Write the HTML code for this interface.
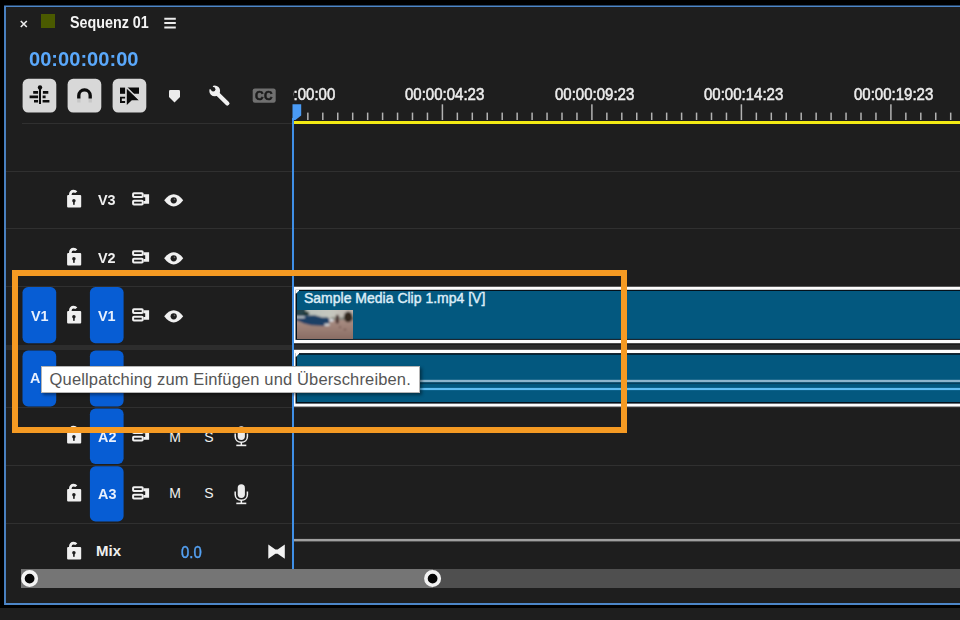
<!DOCTYPE html>
<html lang="de">
<head>
<meta charset="utf-8">
<title>Sequenz 01</title>
<style>
html,body{margin:0;padding:0;background:#000;}
body{width:960px;height:620px;overflow:hidden;position:relative;font-family:"Liberation Sans",sans-serif;color:#e4e4e4;}
*{box-sizing:border-box;}
#app{position:absolute;left:0;top:0;width:960px;height:620px;overflow:hidden;background:#000;}
#app *{position:absolute;}
#app svg *{position:static;}
#app span{display:block;white-space:pre;transform-origin:0 0;}
.panel{left:6px;top:7px;width:954px;height:596px;background:#1e1e1e;}
.under{left:0;top:608px;width:960px;height:12px;background:#1e1e1e;}
.hl{left:6px;width:954px;height:1px;background:#303030;}
.band{left:6px;top:344.5px;width:954px;height:5px;background:#2d2d2d;}
.chip{left:41px;top:14px;width:14px;height:14px;background:#4a5a00;}
.title{left:70px;top:13.7px;font:bold 16px/18px "Liberation Sans",sans-serif;color:#f4f4f4;transform:scaleX(0.895);}
.tc{left:28.8px;top:47.2px;font:bold 21px/24px "Liberation Sans",sans-serif;color:#5aa8fb;transform:scaleX(0.957);}
.rulerclip{left:293px;top:80px;width:667px;height:45px;overflow:hidden;}
.rl{top:5.4px;font:16.5px/19px "Liberation Sans",sans-serif;color:#ededed;-webkit-text-stroke:0.55px #ededed;transform:scaleX(0.909);}
.yl{left:294px;top:121px;width:666px;height:3px;background:#f2ea14;}
.ic{overflow:visible;}
.tn{left:98.3px;font:bold 15px/19px "Liberation Sans",sans-serif;color:#f0f0f0;transform:scaleX(0.96);}
.ms{font:14px/16px "Liberation Sans",sans-serif;color:#f0f0f0;}
.bn{font:bold 15px/19px "Liberation Sans",sans-serif;color:#e8f0fd;transform:scaleX(0.96);}
.ct{left:304px;top:290.1px;font:14px/17px "Liberation Sans",sans-serif;color:#dcecf7;-webkit-text-stroke:0.45px #dcecf7;}
.orange{left:12px;top:270px;width:615px;height:163px;border:6px solid #f59a23;}
.tip{left:41px;top:366px;width:379px;height:27px;background:#fff;border:1px solid #b4b4b4;box-shadow:2px 2px 3px rgba(0,0,0,.42);}
.tip span{left:7.6px;top:2.2px;font:16.5px/21px "Liberation Sans",sans-serif;letter-spacing:0.14px;color:#555;}
.sb{left:21px;top:569px;height:19px;}
</style>
</head>
<body>
<div id="app">
<svg style="left:0;top:0" width="960" height="620" viewBox="0 0 960 620"><path d="M960 6.5H5V604H960" fill="none" stroke="#4d86c8" stroke-width="1.9"/></svg>
<div class="panel"></div>
<div class="under"></div>

<!-- tab header -->
<svg style="left:20px;top:20px" width="8" height="8" viewBox="0 0 8 8"><path d="M0.8 1L6.8 7M6.8 1L0.8 7" stroke="#ececec" stroke-width="1.6" fill="none"/></svg>
<div class="chip"></div>
<span class="title">Sequenz 01</span>
<svg style="left:164px;top:17px" width="12" height="12" viewBox="0 0 12 12"><path d="M0.3 1.8h11.5M0.3 6.1h11.5M0.3 10.5h11.5" stroke="#ececec" stroke-width="2" fill="none"/></svg>
<span class="tc">00:00:00:00</span>

<!-- toolbar -->
<svg class="ic" style="left:22px;top:78px" width="36" height="36" viewBox="0 0 36 36"><rect x="0.6" y="0.8" width="33.7" height="33.8" rx="5.6" fill="#d8d8d8"/><g transform="translate(0.6,1)"><path d="M17.4 8V25" stroke="#0c0c0c" stroke-width="2"/><circle cx="17.4" cy="8.4" r="2.2" fill="#0c0c0c"/><path d="M10.6 13.4h4.9M20.3 13.4h5.4M7 17.9h8.5M20 17.9h3M11.4 22.3h4.1M20 22.3h6.8" stroke="#0c0c0c" stroke-width="2.6" fill="none"/></g></svg>
<svg class="ic" style="left:67px;top:78px" width="36" height="36" viewBox="0 0 36 36"><rect x="0.6" y="0.8" width="33.7" height="33.8" rx="5.6" fill="#d8d8d8"/><g transform="translate(0.6,1)"><path d="M11.2 23.4V16.6a5.7 5.7 0 0 1 11.4 0V23.4" stroke="#c6c6c6" stroke-width="3.3" fill="none"/><path d="M11.2 19.4V16.6a5.7 5.7 0 0 1 11.4 0V19.4" stroke="#0c0c0c" stroke-width="3.3" fill="none"/></g></svg>
<svg class="ic" style="left:112px;top:78px" width="36" height="36" viewBox="0 0 36 36"><rect x="0.6" y="0.8" width="33.7" height="33.8" rx="5.6" fill="#d8d8d8"/><g transform="translate(0.6,1)"><rect x="7.4" y="8.6" width="5.1" height="6.2" fill="#0c0c0c"/><path d="M14.6 8.6h11.8v6.2h-5.6z" fill="#0c0c0c"/><path d="M12.5 18.6H8.3v4.4h4.2" stroke="#0c0c0c" stroke-width="1.8" fill="none"/><path d="M14.2 9.8L26.2 21.2H19.2L14.2 26Z" fill="#0c0c0c"/><path d="M13.9 8.2L26.6 20.6" stroke="#d8d8d8" stroke-width="1.1"/></g></svg>
<svg style="left:168px;top:89px" width="13" height="14" viewBox="0 0 13 14"><path d="M1 2.3Q1 1 2.3 1h8.4Q12 1 12 2.3V8L6.5 13.5L1 8Z" fill="#ececec"/></svg>
<svg style="left:207px;top:84px" width="25" height="23" viewBox="0 0 25 23"><path d="M9.2 8.4L20.4 19.4" stroke="#f0f0f0" stroke-width="4.2" stroke-linecap="round" fill="none"/><circle cx="7.7" cy="6.9" r="5.4" fill="#f0f0f0"/><path d="M7.4 6.6L1.2 4.8L5.2 0.6Z" fill="#1e1e1e"/><circle cx="6.2" cy="5.3" r="2.2" fill="#1e1e1e"/></svg>
<svg style="left:252px;top:88px" width="24" height="15" viewBox="0 0 24 15"><rect x="0.7" y="0.4" width="23" height="14.4" rx="2.2" fill="#707070"/></svg><span style="left:255.4px;top:88.7px;font:bold 12.5px/14px 'Liberation Sans',sans-serif;color:#1c1c1c;-webkit-text-stroke:0.6px #1c1c1c;letter-spacing:0.5px;transform:scaleX(0.95)">CC</span>

<!-- separators -->
<div class="hl" style="left:22px;width:270px;top:123px"></div>
<div class="hl" style="top:171px"></div>
<div class="hl" style="top:228px"></div>
<div class="hl" style="top:286px"></div>
<div class="band"></div>
<div class="hl" style="top:407px"></div>
<div class="hl" style="top:465px"></div>
<div class="hl" style="top:523px"></div>

<!-- ruler -->
<div class="rulerclip"><span class="rl" style="left:-37.5px">00:00:00:00</span><span class="rl" style="left:112.0px">00:00:04:23</span><span class="rl" style="left:261.5px">00:00:09:23</span><span class="rl" style="left:411.0px">00:00:14:23</span><span class="rl" style="left:560.5px">00:00:19:23</span></div>
<svg style="left:0;top:0" width="960" height="125" viewBox="0 0 960 125"><g fill="#b2b2b2"><rect x="307.1" y="112.6" width="1.5" height="7.4"/><rect x="322.05" y="112.6" width="1.5" height="7.4"/><rect x="337.0" y="112.6" width="1.5" height="7.4"/><rect x="351.95" y="112.6" width="1.5" height="7.4"/><rect x="366.9" y="112.6" width="1.5" height="7.4"/><rect x="381.85" y="112.6" width="1.5" height="7.4"/><rect x="396.8" y="112.6" width="1.5" height="7.4"/><rect x="411.75" y="112.6" width="1.5" height="7.4"/><rect x="426.7" y="112.6" width="1.5" height="7.4"/><rect x="441.65" y="104.3" width="1.5" height="15.7"/><rect x="456.6" y="112.6" width="1.5" height="7.4"/><rect x="471.55" y="112.6" width="1.5" height="7.4"/><rect x="486.5" y="112.6" width="1.5" height="7.4"/><rect x="501.45" y="112.6" width="1.5" height="7.4"/><rect x="516.4" y="112.6" width="1.5" height="7.4"/><rect x="531.35" y="112.6" width="1.5" height="7.4"/><rect x="546.3" y="112.6" width="1.5" height="7.4"/><rect x="561.25" y="112.6" width="1.5" height="7.4"/><rect x="576.2" y="112.6" width="1.5" height="7.4"/><rect x="591.15" y="104.3" width="1.5" height="15.7"/><rect x="606.1" y="112.6" width="1.5" height="7.4"/><rect x="621.05" y="112.6" width="1.5" height="7.4"/><rect x="636.0" y="112.6" width="1.5" height="7.4"/><rect x="650.95" y="112.6" width="1.5" height="7.4"/><rect x="665.9" y="112.6" width="1.5" height="7.4"/><rect x="680.85" y="112.6" width="1.5" height="7.4"/><rect x="695.8" y="112.6" width="1.5" height="7.4"/><rect x="710.75" y="112.6" width="1.5" height="7.4"/><rect x="725.7" y="112.6" width="1.5" height="7.4"/><rect x="740.65" y="104.3" width="1.5" height="15.7"/><rect x="755.6" y="112.6" width="1.5" height="7.4"/><rect x="770.55" y="112.6" width="1.5" height="7.4"/><rect x="785.5" y="112.6" width="1.5" height="7.4"/><rect x="800.45" y="112.6" width="1.5" height="7.4"/><rect x="815.4" y="112.6" width="1.5" height="7.4"/><rect x="830.35" y="112.6" width="1.5" height="7.4"/><rect x="845.3" y="112.6" width="1.5" height="7.4"/><rect x="860.25" y="112.6" width="1.5" height="7.4"/><rect x="875.2" y="112.6" width="1.5" height="7.4"/><rect x="890.15" y="104.3" width="1.5" height="15.7"/><rect x="905.1" y="112.6" width="1.5" height="7.4"/><rect x="920.05" y="112.6" width="1.5" height="7.4"/><rect x="935.0" y="112.6" width="1.5" height="7.4"/><rect x="949.95" y="112.6" width="1.5" height="7.4"/></g></svg>
<div class="yl"></div>

<!-- clips -->
<svg style="left:0;top:280px" width="960" height="130" viewBox="0 280 960 130">
<rect x="294" y="286.8" width="680" height="56.4" fill="#fdfdfd"/><rect x="295.5" y="289.8" width="680" height="50.1" fill="#03101a"/><rect x="297" y="291" width="680" height="47.9" fill="#03587f"/>
<path d="M295.5 289.8H299V290.4L296.2 293.4H295.5Z" fill="#fdfdfd"/>
<rect x="294" y="349.8" width="680" height="56.8" fill="#fdfdfd"/><rect x="295.5" y="353.1" width="680" height="50.5" fill="#03101a"/><rect x="297" y="354.7" width="680" height="47.3" fill="#03587f"/>
<path d="M295.5 353.1H299V353.7L296.2 356.7H295.5Z" fill="#fdfdfd"/>
<rect x="297" y="379.8" width="680" height="2.6" fill="#8db5cd"/><rect x="297" y="382.4" width="680" height="1.7" fill="#043f5e"/><rect x="297" y="387.9" width="680" height="2.2" fill="#60bdf1"/>
</svg>
<span class="ct">Sample Media Clip 1.mp4 [V]</span>
<svg style="left:297px;top:309.5px" width="56" height="29.4" viewBox="0 0 56 29.5" preserveAspectRatio="none">
<defs><filter id="bl" x="-20%" y="-20%" width="140%" height="140%"><feGaussianBlur stdDeviation="1"/></filter>
<linearGradient id="sand" x1="0" y1="0" x2="0" y2="1"><stop offset="0" stop-color="#ab8f85"/><stop offset="0.45" stop-color="#9a7d73"/><stop offset="1" stop-color="#84685f"/></linearGradient>
<linearGradient id="sky" x1="0" y1="0" x2="1" y2="0"><stop offset="0" stop-color="#b4bdb8"/><stop offset="0.6" stop-color="#c6c7bf"/><stop offset="1" stop-color="#bcaea6"/></linearGradient>
<clipPath id="tcp"><rect width="56" height="29.5"/></clipPath></defs>
<g clip-path="url(#tcp)"><rect width="56" height="29.5" fill="#a4867b"/>
<g filter="url(#bl)">
<rect x="-3" y="-3" width="62" height="12" fill="url(#sky)"/>
<rect x="-3" y="8.6" width="62" height="24" fill="url(#sand)"/>
<rect x="34" y="7.4" width="25" height="2.6" fill="#84857c"/>
<rect x="-3" y="-3" width="11.5" height="10" fill="#25454d"/>
<ellipse cx="9.4" cy="3.6" rx="2.8" ry="2" fill="#1d3229"/>
<path d="M-2 7.2L8 5.4L18 5.2L25.5 7.6L30.5 7.2L33 10L31.5 13.8L27 16L14 15.4L7 13.6L1.5 11L-2 10.4Z" fill="#1c4166"/>
<rect x="-2" y="6.3" width="9.8" height="1.8" fill="#ccd1d5"/>
<ellipse cx="34.4" cy="10.4" rx="2.4" ry="1.3" fill="#dfe4ea"/>
<ellipse cx="30" cy="14.8" rx="3" ry="1.2" fill="#d5d6d8"/>
<rect x="38.8" y="4.8" width="3" height="8.8" rx="1.3" fill="#452c29"/>
<ellipse cx="51.2" cy="7" rx="4.4" ry="5.4" fill="#30261f"/>
<ellipse cx="43" cy="17" rx="1.1" ry="0.7" fill="#654a43"/>
<ellipse cx="48" cy="19.5" rx="1.3" ry="0.7" fill="#654a43"/>
</g></g></svg>

<!-- mix track line -->
<svg style="left:294px;top:536px" width="666" height="8" viewBox="0 0 666 8"><rect x="0" y="2.9" width="666" height="2.5" fill="#a0a0a0"/></svg>

<!-- track headers -->
<svg class="ic" style="left:66px;top:190px" width="17" height="19" viewBox="0 0 17 19"><path d="M4.3 7V4.8Q4.3 1.1 7.6 1.1Q9.4 1.1 10.3 2.3" fill="none" stroke="#f0f0f0" stroke-width="2.6"/><rect x="1.1" y="5.1" width="14.1" height="12.4" rx="1" fill="#f0f0f0"/><circle cx="7.9" cy="10.7" r="1.75" fill="#1e1e1e"/><rect x="7.1" y="11" width="1.6" height="3.8" fill="#1e1e1e"/></svg><span class="tn" style="top:190.3px">V3</span><svg class="ic" style="left:132px;top:192px" width="18" height="14" viewBox="0 0 18 14"><g fill="none" stroke="#f0f0f0" stroke-width="2"><rect x="1.1" y="1.3" width="9.6" height="3.7" rx="0.8"/><rect x="1.1" y="8.8" width="9.6" height="3.7" rx="0.8"/></g><path d="M11.6 2.3H17.1V11.8H11.6V8.9H13.2V5.2H11.6Z" fill="#f0f0f0"/></svg><svg class="ic" style="left:164px;top:194px" width="20" height="13" viewBox="0 0 20 13"><path d="M0.2 6.3Q4.6 0.2 9.7 0.2Q14.8 0.2 19.2 6.3Q14.8 12.4 9.7 12.4Q4.6 12.4 0.2 6.3Z" fill="#f0f0f0"/><circle cx="9.7" cy="6.3" r="3.1" fill="#1e1e1e"/><circle cx="10.5" cy="5.4" r="0.8" fill="#666"/></svg><svg class="ic" style="left:66px;top:248px" width="17" height="19" viewBox="0 0 17 19"><path d="M4.3 7V4.8Q4.3 1.1 7.6 1.1Q9.4 1.1 10.3 2.3" fill="none" stroke="#f0f0f0" stroke-width="2.6"/><rect x="1.1" y="5.1" width="14.1" height="12.4" rx="1" fill="#f0f0f0"/><circle cx="7.9" cy="10.7" r="1.75" fill="#1e1e1e"/><rect x="7.1" y="11" width="1.6" height="3.8" fill="#1e1e1e"/></svg><span class="tn" style="top:248.3px">V2</span><svg class="ic" style="left:132px;top:250px" width="18" height="14" viewBox="0 0 18 14"><g fill="none" stroke="#f0f0f0" stroke-width="2"><rect x="1.1" y="1.3" width="9.6" height="3.7" rx="0.8"/><rect x="1.1" y="8.8" width="9.6" height="3.7" rx="0.8"/></g><path d="M11.6 2.3H17.1V11.8H11.6V8.9H13.2V5.2H11.6Z" fill="#f0f0f0"/></svg><svg class="ic" style="left:164px;top:252px" width="20" height="13" viewBox="0 0 20 13"><path d="M0.2 6.3Q4.6 0.2 9.7 0.2Q14.8 0.2 19.2 6.3Q14.8 12.4 9.7 12.4Q4.6 12.4 0.2 6.3Z" fill="#f0f0f0"/><circle cx="9.7" cy="6.3" r="3.1" fill="#1e1e1e"/><circle cx="10.5" cy="5.4" r="0.8" fill="#666"/></svg><svg class="ic" style="left:22px;top:287px" width="103" height="58" viewBox="0 0 103 58"><rect x="0.5" y="0.0" width="33.7" height="56.2" rx="5.6" fill="#075dd4"/></svg><span class="bn" style="left:30.8px;top:306.3px">V1</span><svg class="ic" style="left:66px;top:306px" width="17" height="19" viewBox="0 0 17 19"><path d="M4.3 7V4.8Q4.3 1.1 7.6 1.1Q9.4 1.1 10.3 2.3" fill="none" stroke="#f0f0f0" stroke-width="2.6"/><rect x="1.1" y="5.1" width="14.1" height="12.4" rx="1" fill="#f0f0f0"/><circle cx="7.9" cy="10.7" r="1.75" fill="#1e1e1e"/><rect x="7.1" y="11" width="1.6" height="3.8" fill="#1e1e1e"/></svg><svg class="ic" style="left:22px;top:287px" width="103" height="58" viewBox="0 0 103 58"><rect x="67.9" y="0.0" width="33.7" height="56.2" rx="5.6" fill="#075dd4"/></svg><span class="bn" style="left:98.2px;top:306.3px">V1</span><svg class="ic" style="left:132px;top:308px" width="18" height="14" viewBox="0 0 18 14"><g fill="none" stroke="#f0f0f0" stroke-width="2"><rect x="1.1" y="1.3" width="9.6" height="3.7" rx="0.8"/><rect x="1.1" y="8.8" width="9.6" height="3.7" rx="0.8"/></g><path d="M11.6 2.3H17.1V11.8H11.6V8.9H13.2V5.2H11.6Z" fill="#f0f0f0"/></svg><svg class="ic" style="left:164px;top:310px" width="20" height="13" viewBox="0 0 20 13"><path d="M0.2 6.3Q4.6 0.2 9.7 0.2Q14.8 0.2 19.2 6.3Q14.8 12.4 9.7 12.4Q4.6 12.4 0.2 6.3Z" fill="#f0f0f0"/><circle cx="9.7" cy="6.3" r="3.1" fill="#1e1e1e"/><circle cx="10.5" cy="5.4" r="0.8" fill="#666"/></svg><svg class="ic" style="left:22px;top:350px" width="103" height="58" viewBox="0 0 103 58"><rect x="0.5" y="0.6" width="33.7" height="55.8" rx="5.6" fill="#075dd4"/></svg><span class="bn" style="left:30.1px;top:368.3px">A1</span><svg class="ic" style="left:66px;top:368px" width="17" height="19" viewBox="0 0 17 19"><path d="M4.3 7V4.8Q4.3 1.1 7.6 1.1Q9.4 1.1 10.3 2.3" fill="none" stroke="#f0f0f0" stroke-width="2.6"/><rect x="1.1" y="5.1" width="14.1" height="12.4" rx="1" fill="#f0f0f0"/><circle cx="7.9" cy="10.7" r="1.75" fill="#1e1e1e"/><rect x="7.1" y="11" width="1.6" height="3.8" fill="#1e1e1e"/></svg><svg class="ic" style="left:22px;top:350px" width="103" height="58" viewBox="0 0 103 58"><rect x="67.9" y="0.6" width="33.7" height="55.8" rx="5.6" fill="#075dd4"/></svg><span class="bn" style="left:97.5px;top:368.3px">A1</span><svg class="ic" style="left:132px;top:370px" width="18" height="14" viewBox="0 0 18 14"><g fill="none" stroke="#f0f0f0" stroke-width="2"><rect x="1.1" y="1.3" width="9.6" height="3.7" rx="0.8"/><rect x="1.1" y="8.8" width="9.6" height="3.7" rx="0.8"/></g><path d="M11.6 2.3H17.1V11.8H11.6V8.9H13.2V5.2H11.6Z" fill="#f0f0f0"/></svg><span class="ms" style="left:169.3px;top:369px">M</span><span class="ms" style="left:204.3px;top:369px">S</span><svg class="ic" style="left:234px;top:367.6px" width="15" height="21" viewBox="0 0 15 21"><rect x="3.7" y="0.3" width="7.2" height="13.6" rx="3.6" fill="#ececec"/><path d="M1.2 7.6v3c0 3.4 2.7 5.7 6.1 5.7s6.1-2.3 6.1-5.7v-3" fill="none" stroke="#f0f0f0" stroke-width="1.5"/><rect x="6.6" y="16" width="1.5" height="3" fill="#f0f0f0"/><rect x="2.3" y="18.6" width="10" height="1.6" fill="#f0f0f0"/></svg><svg class="ic" style="left:66px;top:426px" width="17" height="19" viewBox="0 0 17 19"><path d="M4.3 7V4.8Q4.3 1.1 7.6 1.1Q9.4 1.1 10.3 2.3" fill="none" stroke="#f0f0f0" stroke-width="2.6"/><rect x="1.1" y="5.1" width="14.1" height="12.4" rx="1" fill="#f0f0f0"/><circle cx="7.9" cy="10.7" r="1.75" fill="#1e1e1e"/><rect x="7.1" y="11" width="1.6" height="3.8" fill="#1e1e1e"/></svg><svg class="ic" style="left:22px;top:408px" width="103" height="58" viewBox="0 0 103 58"><rect x="67.9" y="0.6" width="33.7" height="55.3" rx="5.6" fill="#075dd4"/></svg><span class="bn" style="left:97.5px;top:427.0px">A2</span><svg class="ic" style="left:132px;top:428px" width="18" height="14" viewBox="0 0 18 14"><g fill="none" stroke="#f0f0f0" stroke-width="2"><rect x="1.1" y="1.3" width="9.6" height="3.7" rx="0.8"/><rect x="1.1" y="8.8" width="9.6" height="3.7" rx="0.8"/></g><path d="M11.6 2.3H17.1V11.8H11.6V8.9H13.2V5.2H11.6Z" fill="#f0f0f0"/></svg><span class="ms" style="left:169.3px;top:428.7px">M</span><span class="ms" style="left:204.3px;top:428.7px">S</span><svg class="ic" style="left:234px;top:425.6px" width="15" height="21" viewBox="0 0 15 21"><rect x="3.7" y="0.3" width="7.2" height="13.6" rx="3.6" fill="#ececec"/><path d="M1.2 7.6v3c0 3.4 2.7 5.7 6.1 5.7s6.1-2.3 6.1-5.7v-3" fill="none" stroke="#f0f0f0" stroke-width="1.5"/><rect x="6.6" y="16" width="1.5" height="3" fill="#f0f0f0"/><rect x="2.3" y="18.6" width="10" height="1.6" fill="#f0f0f0"/></svg><svg class="ic" style="left:66px;top:484px" width="17" height="19" viewBox="0 0 17 19"><path d="M4.3 7V4.8Q4.3 1.1 7.6 1.1Q9.4 1.1 10.3 2.3" fill="none" stroke="#f0f0f0" stroke-width="2.6"/><rect x="1.1" y="5.1" width="14.1" height="12.4" rx="1" fill="#f0f0f0"/><circle cx="7.9" cy="10.7" r="1.75" fill="#1e1e1e"/><rect x="7.1" y="11" width="1.6" height="3.8" fill="#1e1e1e"/></svg><svg class="ic" style="left:22px;top:466px" width="103" height="58" viewBox="0 0 103 58"><rect x="67.9" y="0.3" width="33.7" height="55.2" rx="5.6" fill="#075dd4"/></svg><span class="bn" style="left:97.5px;top:484.3px">A3</span><svg class="ic" style="left:132px;top:486px" width="18" height="14" viewBox="0 0 18 14"><g fill="none" stroke="#f0f0f0" stroke-width="2"><rect x="1.1" y="1.3" width="9.6" height="3.7" rx="0.8"/><rect x="1.1" y="8.8" width="9.6" height="3.7" rx="0.8"/></g><path d="M11.6 2.3H17.1V11.8H11.6V8.9H13.2V5.2H11.6Z" fill="#f0f0f0"/></svg><span class="ms" style="left:169.3px;top:485px">M</span><span class="ms" style="left:204.3px;top:485px">S</span><svg class="ic" style="left:234px;top:483.6px" width="15" height="21" viewBox="0 0 15 21"><rect x="3.7" y="0.3" width="7.2" height="13.6" rx="3.6" fill="#ececec"/><path d="M1.2 7.6v3c0 3.4 2.7 5.7 6.1 5.7s6.1-2.3 6.1-5.7v-3" fill="none" stroke="#f0f0f0" stroke-width="1.5"/><rect x="6.6" y="16" width="1.5" height="3" fill="#f0f0f0"/><rect x="2.3" y="18.6" width="10" height="1.6" fill="#f0f0f0"/></svg><svg class="ic" style="left:66px;top:541.7px" width="17" height="19" viewBox="0 0 17 19"><path d="M4.3 7V4.8Q4.3 1.1 7.6 1.1Q9.4 1.1 10.3 2.3" fill="none" stroke="#f0f0f0" stroke-width="2.6"/><rect x="1.1" y="5.1" width="14.1" height="12.4" rx="1" fill="#f0f0f0"/><circle cx="7.9" cy="10.7" r="1.75" fill="#1e1e1e"/><rect x="7.1" y="11" width="1.6" height="3.8" fill="#1e1e1e"/></svg>
<span class="tn" style="left:96px;top:542.3px;font:bold 15px/18px 'Liberation Sans',sans-serif;-webkit-text-stroke:0;transform:none">Mix</span>
<span style="left:181.3px;top:544.3px;font:16px/18px 'Liberation Sans',sans-serif;color:#55a2f4;-webkit-text-stroke:0.4px #55a2f4;transform:scaleX(0.93)">0.0</span>
<svg style="left:268px;top:544px" width="17" height="15" viewBox="0 0 17 15"><path d="M0.3 0.5L7.4 5.4H9.6L16.8 0.5V14.8L9.6 9.8H7.4L0.3 14.8Z" fill="#f2f2f2"/></svg>

<!-- playhead -->
<div style="left:292px;top:118px;width:2px;height:454px;background:#3f8fe6"></div>
<svg style="left:292px;top:104px" width="10" height="17" viewBox="0 0 10 17"><path d="M0.5 0.3H9.2V11.5L3.4 16H0.5Z" fill="#4a9bf5"/></svg>

<!-- scrollbar -->
<div class="sb" style="width:412px;background:#757575"></div>
<div class="sb" style="left:433px;width:527px;background:#4f4f4f"></div>
<svg style="left:20px;top:569px" width="20" height="20" viewBox="0 0 20 20"><circle cx="9.6" cy="9.6" r="6.7" fill="#050505" stroke="#f2f2f2" stroke-width="3.6"/></svg>
<svg style="left:423px;top:569px" width="20" height="20" viewBox="0 0 20 20"><circle cx="9.6" cy="9.6" r="6.7" fill="#050505" stroke="#f2f2f2" stroke-width="3.6"/></svg>

<!-- annotation + tooltip -->
<div class="orange"></div>
<div class="tip"><span>Quellpatching zum Einfügen und Überschreiben.</span></div>
</div>
</body>
</html>
